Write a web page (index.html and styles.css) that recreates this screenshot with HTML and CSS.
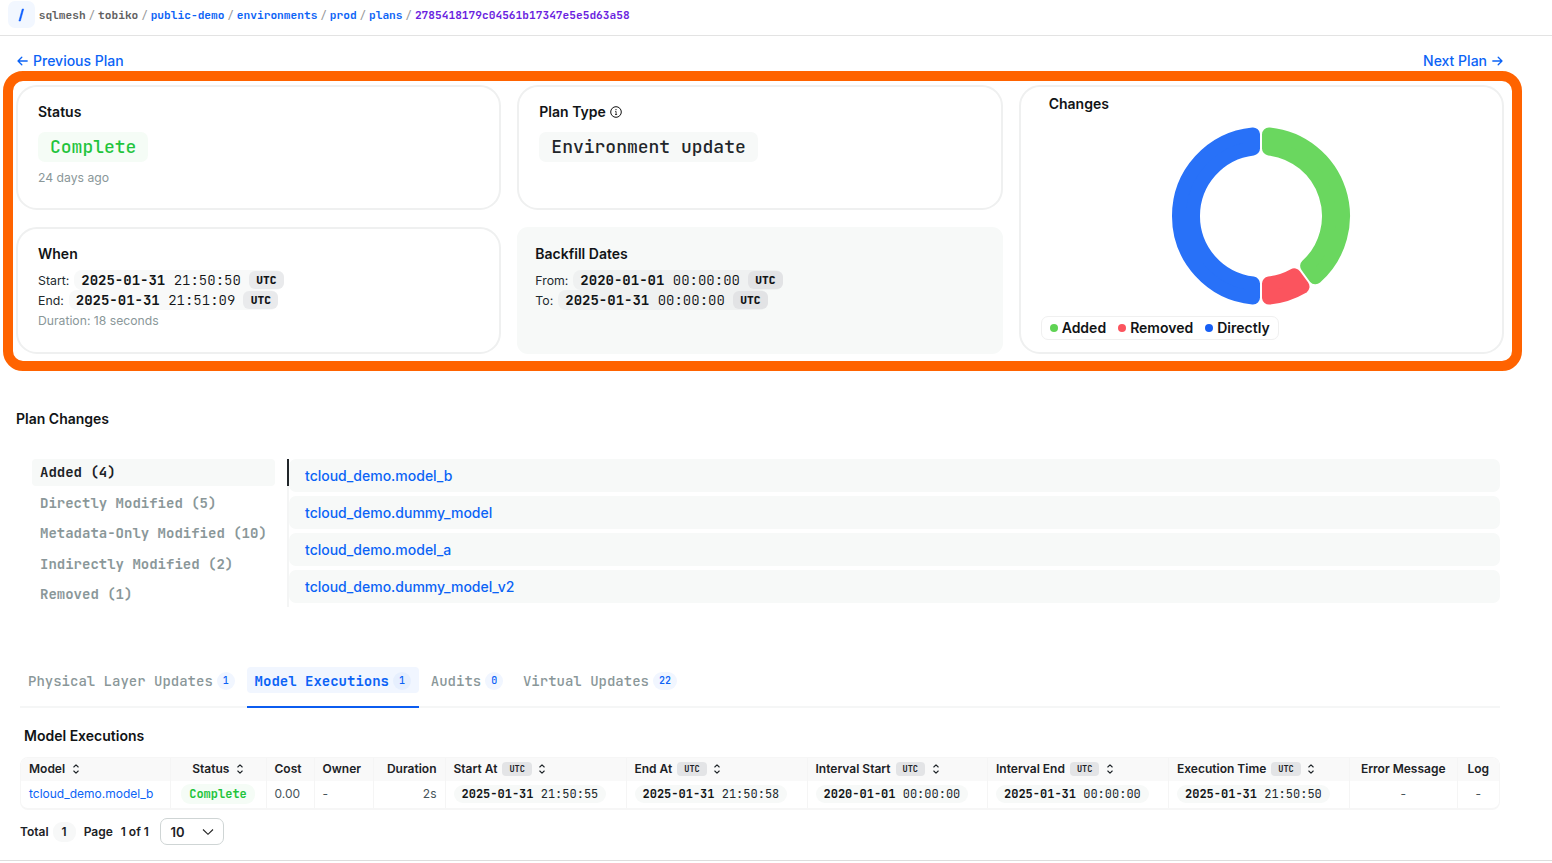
FILE: index.html
```html
<!DOCTYPE html>
<html lang="en">
<head>
<meta charset="utf-8">
<title>Plan</title>
<link rel="stylesheet" href="styles.css">
</head>
<body>
<svg class="defs" width="0" height="0"><symbol id="sort" viewBox="0 0 8 12"><path d="M1.8 4 4 1.8 6.2 4M1.8 8 4 10.2 6.2 8" fill="none" stroke="currentColor" stroke-width="1.1" stroke-linecap="round" stroke-linejoin="round"/></symbol></svg>
<header class="topbar">
  <div class="logo"><svg width="27" height="27" viewBox="0 0 27 27"><path d="M14.2 8h1.5L12.4 20h-1.5z" fill="#0a5cff" stroke="#0a5cff" stroke-width=".5"/></svg></div>
  <nav class="crumbs mono"><span>sqlmesh</span><i>/</i><span>tobiko</span><i>/</i><a>public-demo</a><i>/</i><a>environments</a><i>/</i><a>prod</a><i>/</i><a>plans</a><i>/</i><a class="visited">2785418179c04561b17347e5e5d63a58</a></nav>
</header>
<main>
  <div class="pager">
    <a><svg width="11" height="10" viewBox="0 0 11 10"><path d="M10.2 5H1M4.8 1.2 1 5l3.8 3.8"/></svg>Previous Plan</a>
    <a>Next Plan<svg width="11" height="10" viewBox="0 0 11 10"><path d="M.8 5H10M6.2 1.2 10 5 6.2 8.8"/></svg></a>
  </div>
  <section class="summary">
    <article class="card">
      <h3>Status</h3>
      <div class="pill green mono">Complete</div>
      <p class="muted ago">24 days ago</p>
    </article>
    <article class="card">
      <h3>Plan Type <svg class="info" width="12" height="12" viewBox="0 0 12 12"><circle cx="6" cy="6" r="5.3" fill="none" stroke="#111" stroke-width="1"/><path d="M5.1 5.4H6.1V8.4M5 8.5H7.1" fill="none" stroke="#111" stroke-width=".8"/><circle cx="6" cy="3.6" r=".65" fill="#111"/></svg></h3>
      <div class="pill mono">Environment update</div>
    </article>
    <article class="card changes">
      <h3>Changes</h3>
      <svg class="donut" width="180" height="180" viewBox="-90 -90 180 180">
        <g stroke-width="14" stroke-linejoin="round">
          <path fill="#6ad75f" stroke="#6ad75f" d="M8-81.61A82 82 0 0 1 54.44 61.32L46.16 49.93A68 68 0 0 0 8-67.53Z"/>
          <path fill="#fb545e" stroke="#fb545e" d="M41.5 70.72A82 82 0 0 1 8 81.61V67.53A68 68 0 0 0 33.22 59.33Z"/>
          <path fill="#2871f8" stroke="#2871f8" d="M-8 81.61A82 82 0 0 1-8-81.61V-67.53A68 68 0 0 0-8 67.53Z"/>
        </g>
      </svg>
      <div class="legend"><span><b class="dot g"></b>Added</span><span><b class="dot r"></b>Removed</span><span><b class="dot b"></b>Directly</span></div>
    </article>
    <article class="card">
      <h3>When</h3>
      <div class="when">Start:<span class="stamp mono"><span class="dt"><b>2025-01-31</b> 21:50:50</span><em>UTC</em></span></div>
      <div class="when">End:<span class="stamp mono"><span class="dt"><b>2025-01-31</b> 21:51:09</span><em>UTC</em></span></div>
      <p class="muted dur">Duration: 18 seconds</p>
    </article>
    <article class="card filled">
      <h3>Backfill Dates</h3>
      <div class="when">From:<span class="stamp mono"><span class="dt"><b>2020-01-01</b> 00:00:00</span><em>UTC</em></span></div>
      <div class="when">To:<span class="stamp mono"><span class="dt"><b>2025-01-31</b> 00:00:00</span><em>UTC</em></span></div>
    </article>
  </section>

  <h2 class="plan-title">Plan Changes</h2>
  <section class="plan">
    <ul class="kinds mono">
      <li class="on">Added (4)</li><li>Directly Modified (5)</li><li>Metadata-Only Modified (10)</li><li>Indirectly Modified (2)</li><li>Removed (1)</li>
    </ul>
    <div class="rail"><div class="thumb"></div></div>
    <ul class="models">
      <li>tcloud_demo.model_b</li><li>tcloud_demo.dummy_model</li><li>tcloud_demo.model_a</li><li>tcloud_demo.dummy_model_v2</li>
    </ul>
  </section>

  <nav class="tabs mono">
    <div class="tab"><span>Physical Layer Updates<b>1</b></span></div>
    <div class="tab on"><span>Model Executions<b>1</b></span></div>
    <div class="tab"><span>Audits<b>0</b></span></div>
    <div class="tab"><span>Virtual Updates<b>22</b></span></div>
  </nav>

  <h2 class="exec-title">Model Executions</h2>
  <div class="table">
    <div class="row head">
      <div>Model<svg class="sort"><use href="#sort"/></svg></div>
      <div class="c">Status<svg class="sort"><use href="#sort"/></svg></div>
      <div>Cost</div><div>Owner</div><div class="e">Duration</div>
      <div>Start At<em class="mono">UTC</em><svg class="sort"><use href="#sort"/></svg></div>
      <div>End At<em class="mono">UTC</em><svg class="sort"><use href="#sort"/></svg></div>
      <div>Interval Start<em class="mono">UTC</em><svg class="sort"><use href="#sort"/></svg></div>
      <div>Interval End<em class="mono">UTC</em><svg class="sort"><use href="#sort"/></svg></div>
      <div>Execution Time<em class="mono">UTC</em><svg class="sort"><use href="#sort"/></svg></div>
      <div class="c">Error Message</div><div class="c">Log</div>
    </div>
    <div class="row body">
      <div><a>tcloud_demo.model_b</a></div>
      <div class="c"><span class="tag green mono">Complete</span></div>
      <div>0.00</div><div>-</div><div class="e">2s</div>
      <div><span class="tag mono"><b>2025-01-31</b> 21:50:55</span></div>
      <div><span class="tag mono"><b>2025-01-31</b> 21:50:58</span></div>
      <div><span class="tag mono"><b>2020-01-01</b> 00:00:00</span></div>
      <div><span class="tag mono"><b>2025-01-31</b> 00:00:00</span></div>
      <div><span class="tag mono"><b>2025-01-31</b> 21:50:50</span></div>
      <div class="c">-</div><div class="c">-</div>
    </div>
  </div>
  <footer class="paging">
    <span class="total">Total</span><span class="count">1</span><span class="page">Page</span><span class="of">1 of 1</span>
    <div class="select">10<svg width="12" height="8" viewBox="0 0 12 8"><path d="M1 1.5 6 6.3 11 1.5" fill="none" stroke="#222" stroke-width="1.1"/></svg></div>
  </footer>
</main>
</body>
</html>
```
FILE: styles.css
```css
* { box-sizing: border-box; margin: 0; padding: 0; }
body { font-family: Inter, sans-serif; color: #111416; background: #fff; height: 863px; overflow: hidden; font-size: 14px; }
.mono { font-family: "JetBrains Mono", "DejaVu Sans Mono", monospace; }
.defs { position: absolute; }
ul { list-style: none; }
i, em { font-style: normal; }
a { color: #0b63f6; }
h2, h3 { font-size: 14px; font-weight: 600; line-height: 20px; }

.topbar { height: 36px; border-bottom: 1px solid #e3e3e3; display: flex; padding: 1px 8px 0; }
.logo { width: 27px; height: 27px; border-radius: 7px; background: #f2f7ff; }
.crumbs { display: flex; margin-left: 3.7px; line-height: 29px; font-size: 11.2px; color: #606060; font-weight: 600; }
.crumbs i { color: #999; width: 12.35px; text-align: center; font-weight: 400; }
.crumbs .visited { color: #6b1fe0; }

main { height: 825px; border-bottom: 1px solid #ddd; }
.pager { height: 35px; padding: 15px 49px 0 17px; display: flex; justify-content: space-between; line-height: 20px; font-weight: 500; }
.pager a { display: flex; align-items: center; gap: 5px; height: 20px; }
.pager svg { fill: none; stroke: currentColor; stroke-width: 1.3; stroke-linecap: round; stroke-linejoin: round; }

.summary { margin-left: 3px; width: 1519px; height: 300px; border: 10px solid #ff6300; border-radius: 20px; padding: 4px 8px 7px 3px; display: grid; grid-template-columns: repeat(3, 1fr); grid-template-rows: 125px 127px; gap: 17px 16px; }
.card { border: 2px solid #eff0f0; border-radius: 21px; padding: 15px 20px 0; }
.card h3 { display: flex; align-items: center; }
.card.filled { border: 0; border-radius: 11px; background: #f7f9f8; padding: 17px 18px 0; }
.info { margin-left: 4.5px; }
.pill { width: max-content; height: 30px; line-height: 30px; margin-top: 10px; padding: 0 12px; border-radius: 7px; background: #f7f9f8; font-size: 18px; color: #1f262a; font-weight: 500; }
.green { background: #f5fcf6; color: #1fc43c; }
.muted { color: #8a9799; font-size: 12.2px; line-height: 18px; }
.ago { margin-top: 7px; }
.dur { margin-top: 2px; }
.when { display: flex; align-items: center; gap: 5px; height: 20px; font-size: 12.3px; color: #222a2e; }
.card h3 + .when { margin-top: 6px; }
.stamp { display: flex; align-items: center; height: 20px; background: #f8f9f9; border-radius: 8px; font-size: 14px; color: #111416; padding-left: 7px; }
.filled .stamp { background: #eff1f1; }
.dt { width: 167.5px; font-weight: 300; }
.stamp b, .tag b { font-weight: 600; }
.stamp em { font-size: 11.2px; font-weight: 800; line-height: 18px; padding: 0 7.5px; background: #e9eaec; border-radius: 6px; }
.filled .stamp em { background: #e2e3e5; }

.changes { grid-row: span 2; padding: 7px 20px 0 28px; }
.donut { display: block; margin: 12px 0 0 122.8px; }
.legend { display: flex; gap: 12px; width: max-content; height: 24px; margin: 10px 0 0 -8px; align-items: center; border: 1px solid #f0f0f0; border-radius: 7px; padding: 0 8px; font-weight: 600; font-size: 14px; }
.legend span { display: flex; align-items: center; gap: 4px; line-height: 18px; padding-bottom: 1px; }
.dot { width: 8px; height: 8px; border-radius: 50%; }
.g { background: #5fd354; } .r { background: #fb545e; } .b { background: #175ff5; }

.plan-title { margin: 38px 0 0 16px; }
.plan { display: flex; padding-left: 32px; margin-top: 30px; height: 148px; }
.kinds { width: 243px; color: #8a9799; }
.kinds li { height: 27px; line-height: 27px; margin-bottom: 3.5px; padding-left: 8px; font-weight: 600; border-radius: 4px; }
.kinds .on { background: #f7f9f8; color: #1c2226; }
.rail { margin-left: 12px; width: 2px; background: #f4f5f5; }
.thumb { height: 27px; background: #22272b; }
.models { width: 1211px; display: flex; flex-direction: column; gap: 4px; }
.models li { height: 33px; line-height: 33px; padding-left: 16px; background: #f7f9f8; border-radius: 7px; color: #0b63f6; font-weight: 500; font-size: 14px; }

.tabs { margin: 60px 0 0 20px; width: 1480px; height: 41px; border-bottom: 2px solid #f5f6f6; display: flex; color: #8a9799; }
.tab { height: 41px; padding: 0 8px; margin-right: 4px; font-weight: 500; }
.tab span { display: flex; align-items: center; height: 26px; line-height: 26px; padding-top: 1px; }
.tab b { font-size: 10px; font-weight: 500; line-height: 18px; padding: 0 5.8px; border-radius: 9px; background: #f1f6ff; color: #0b63f6; margin-left: 4.2px; }
.tab.on { color: #0b63f6; border-bottom: 2px solid #0b5cf0; padding: 0; font-weight: 700; }
.tab.on span { padding: 1px 8px 0; background: #f1f6ff; border-radius: 4px; }
.tab.on b { background: #e6effe; }

.exec-title { margin: 18px 0 0 24px; }
.table { margin: 11px 0 0 20px; width: 1479.5px; border: 1px solid #f6f6f6; border-bottom-width: 2px; border-radius: 8px; overflow: hidden; font-size: 12px; }
.row { display: grid; grid-template-columns: 149.5px 96px 48px 59px 72px 181px 181px 180.5px 181px 180.5px 108.5px 1fr; }
.row > div { display: flex; align-items: center; padding: 0 8px; border-right: 1px solid #f5f5f5; white-space: nowrap; }
.row > div:last-child { border-right: 0; }
.row > .c { justify-content: center; }
.row > .e { justify-content: flex-end; }
.head { height: 23px; background: #f9f9f9; font-weight: 600; color: #1c2226; }
.head > div { padding-bottom: 2px; }
.head > div.c { padding: 0 8px 2px; }
.body { height: 27px; color: #47545a; }
.body > div { padding-bottom: 2px; }
.head em { font-size: 8.6px; line-height: 14px; background: #e3e4e6; border-radius: 4px; padding: 0 7px; margin: 1px 0 0 5px; font-weight: 700; }
.sort { width: 8px; height: 12px; margin: 1px 0 0 6.5px; }
.tag { line-height: 18px; height: 18px; border-radius: 9px; padding: 0 8px; background: #f7f9f8; color: #22292d; }
.tag b { color: #111416; }
.tag.green { background: #f5fcf6; color: #1fc43c; height: 20px; line-height: 20px; font-weight: 600; }

.paging { display: flex; align-items: center; height: 27px; margin: 8px 0 0 20px; font-weight: 600; font-size: 12px; color: #1c2226; }
.count { width: 23px; line-height: 20px; margin: 0 8px 0 4px; text-align: center; border-radius: 9px; background: #f7f8f8; }
.of { margin: 0 11.5px 0 8px; }
.select { width: 64px; height: 27px; border: 1px solid #cfd5d5; border-radius: 7px; display: flex; align-items: center; justify-content: space-between; padding: 0 9px; font-size: 13px; }
```
